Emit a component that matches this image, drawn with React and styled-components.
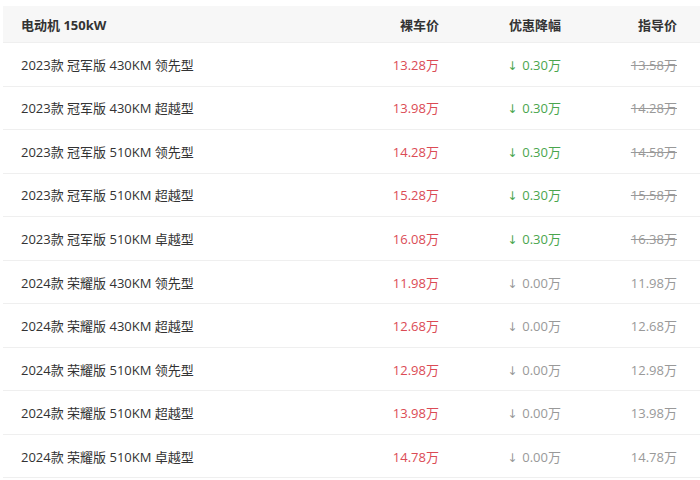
import React from 'react';
import styled, { createGlobalStyle } from 'styled-components';

const GlobalStyle = createGlobalStyle`
  html, body {
    margin: 0;
    padding: 0;
    background: #ffffff;
  }
  body {
    font-family: "Open Sans", "Noto Sans CJK SC", sans-serif;
    color: #333333;
  }
`;

const rows = [
  { name: '2023款 冠军版 430KM 领先型', price: '13.28', cut: '0.30', guide: '13.58' },
  { name: '2023款 冠军版 430KM 超越型', price: '13.98', cut: '0.30', guide: '14.28' },
  { name: '2023款 冠军版 510KM 领先型', price: '14.28', cut: '0.30', guide: '14.58' },
  { name: '2023款 冠军版 510KM 超越型', price: '15.28', cut: '0.30', guide: '15.58' },
  { name: '2023款 冠军版 510KM 卓越型', price: '16.08', cut: '0.30', guide: '16.38' },
  { name: '2024款 荣耀版 430KM 领先型', price: '11.98', cut: '0.00', guide: '11.98' },
  { name: '2024款 荣耀版 430KM 超越型', price: '12.68', cut: '0.00', guide: '12.68' },
  { name: '2024款 荣耀版 510KM 领先型', price: '12.98', cut: '0.00', guide: '12.98' },
  { name: '2024款 荣耀版 510KM 超越型', price: '13.98', cut: '0.00', guide: '13.98' },
  { name: '2024款 荣耀版 510KM 卓越型', price: '14.78', cut: '0.00', guide: '14.78' },
];

export default function App() {
  return (
    <>
      <GlobalStyle />
      <Table>
        <HeadRow>
          <NameCell $bold>电动机 150kW</NameCell>
          <Cell $bold>裸车价</Cell>
          <Cell $bold>优惠降幅</Cell>
          <Cell $bold>指导价</Cell>
        </HeadRow>
        {rows.map((r) => {
          const hasCut = r.cut !== '0.00';
          return (
            <Row key={r.name}>
              <NameCell>{r.name}</NameCell>
              <Cell $color="#db4b55">{r.price}万</Cell>
              <Cell $color={hasCut ? '#4aa64e' : '#999999'}>
                <Arrow>↓</Arrow>{r.cut}万
              </Cell>
              <Cell $color="#999999" $strike={hasCut}>{r.guide}万</Cell>
            </Row>
          );
        })}
      </Table>
    </>
  );
}

const Table = styled.div`
  padding: 6px 0 0 3px;
  width: 697px;
  font-size: 13px;
`;

const gridCols = `
  display: grid;
  grid-template-columns: 1fr 120px 122px 116px;
  padding-right: 23px;
  align-items: center;
`;

const HeadRow = styled.div`
  ${gridCols}
  height: 37px;
  background: #f7f7f7;
  border-bottom: 1px solid #efefef;
  box-sizing: border-box;
`;

const Row = styled.div`
  ${gridCols}
  height: 43.55px;
  border-bottom: 1px solid #efefef;
  box-sizing: border-box;
`;

const Cell = styled.div`
  text-align: right;
  white-space: nowrap;
  color: ${(p) => p.$color || '#333333'};
  font-weight: ${(p) => (p.$bold ? 700 : 400)};
  text-decoration: ${(p) => (p.$strike ? 'line-through' : 'none')};
`;

const NameCell = styled(Cell)`
  text-align: left;
  padding-left: 18px;
`;

const Arrow = styled.span`
  margin-right: 5px;
  font-family: "DejaVu Sans", sans-serif;
  font-size: 12px;
`;
